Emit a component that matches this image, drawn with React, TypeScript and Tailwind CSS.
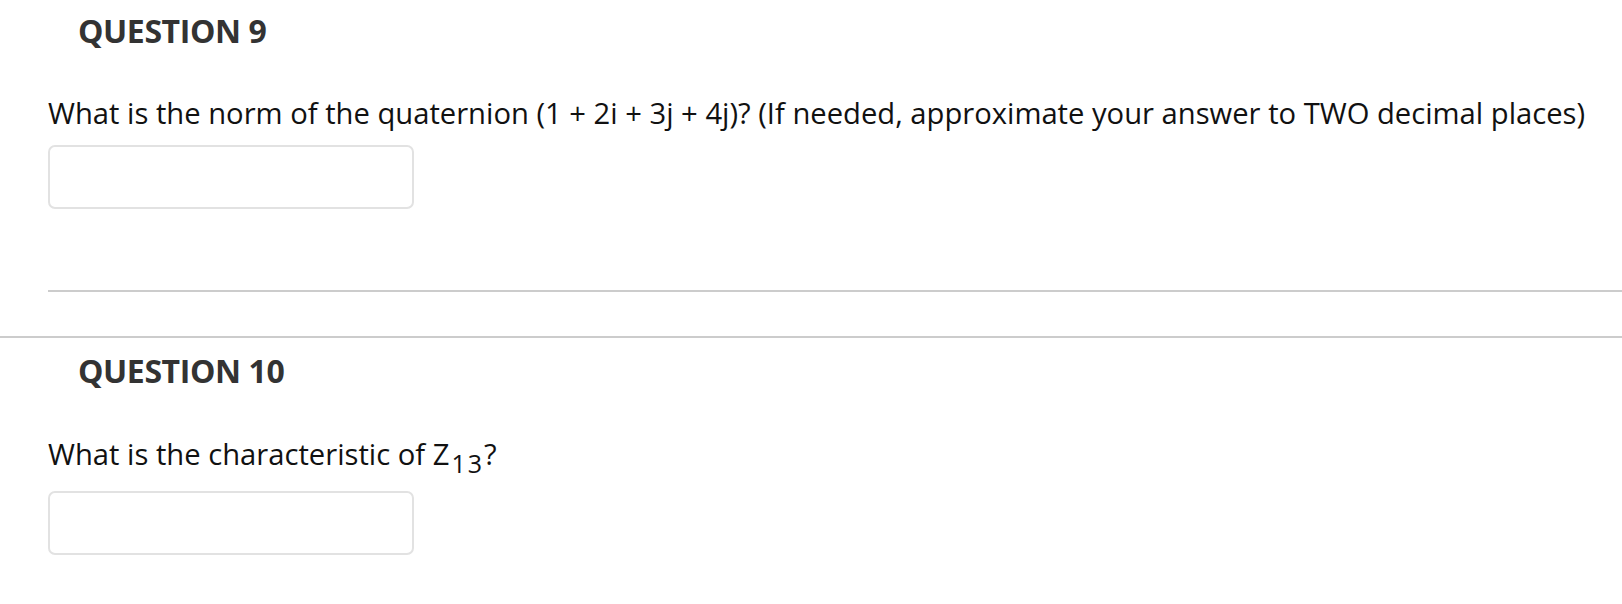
export default function App() {
  return (
    <div className="bg-white w-[1622px] h-[604px] overflow-hidden font-['Open_Sans',sans-serif]">
      <section className="pl-[48px]">
        <h2 className="pl-[30px] pt-[12px] text-[32px] font-bold text-[#333333] leading-[38px] tracking-[-0.4px]">QUESTION 9</h2>
        <p className="mt-[44px] text-[29.2px] leading-[38px] text-[#111111]">
          What is the norm of the quaternion (1 + 2i + 3j + 4j)? (If needed, approximate your answer to TWO decimal places)
        </p>
        <input type="text" className="mt-[13px] block w-[366px] h-[64px] rounded-[7px] border-2 border-[#e2e2e2] bg-white" />
        <div className="mt-[81px] h-[2px] bg-[#cccccc]" />
      </section>
      <div className="mt-[44px] h-[2px] bg-[#cccccc]" />
      <section className="pl-[48px]">
        <h2 className="pl-[30px] pt-[14px] text-[32px] font-bold text-[#333333] leading-[38px] tracking-[-0.4px]">QUESTION 10</h2>
        <p className="mt-[45px] text-[29.2px] leading-[38px] text-[#111111]">
          What is the characteristic of Z<span className="text-[25px] leading-none align-[-8px] tracking-[2px] ml-[2px]">13</span>?
        </p>
        <input type="text" className="mt-[15px] block w-[366px] h-[64px] rounded-[7px] border-2 border-[#e2e2e2] bg-white" />
      </section>
    </div>
  );
}
